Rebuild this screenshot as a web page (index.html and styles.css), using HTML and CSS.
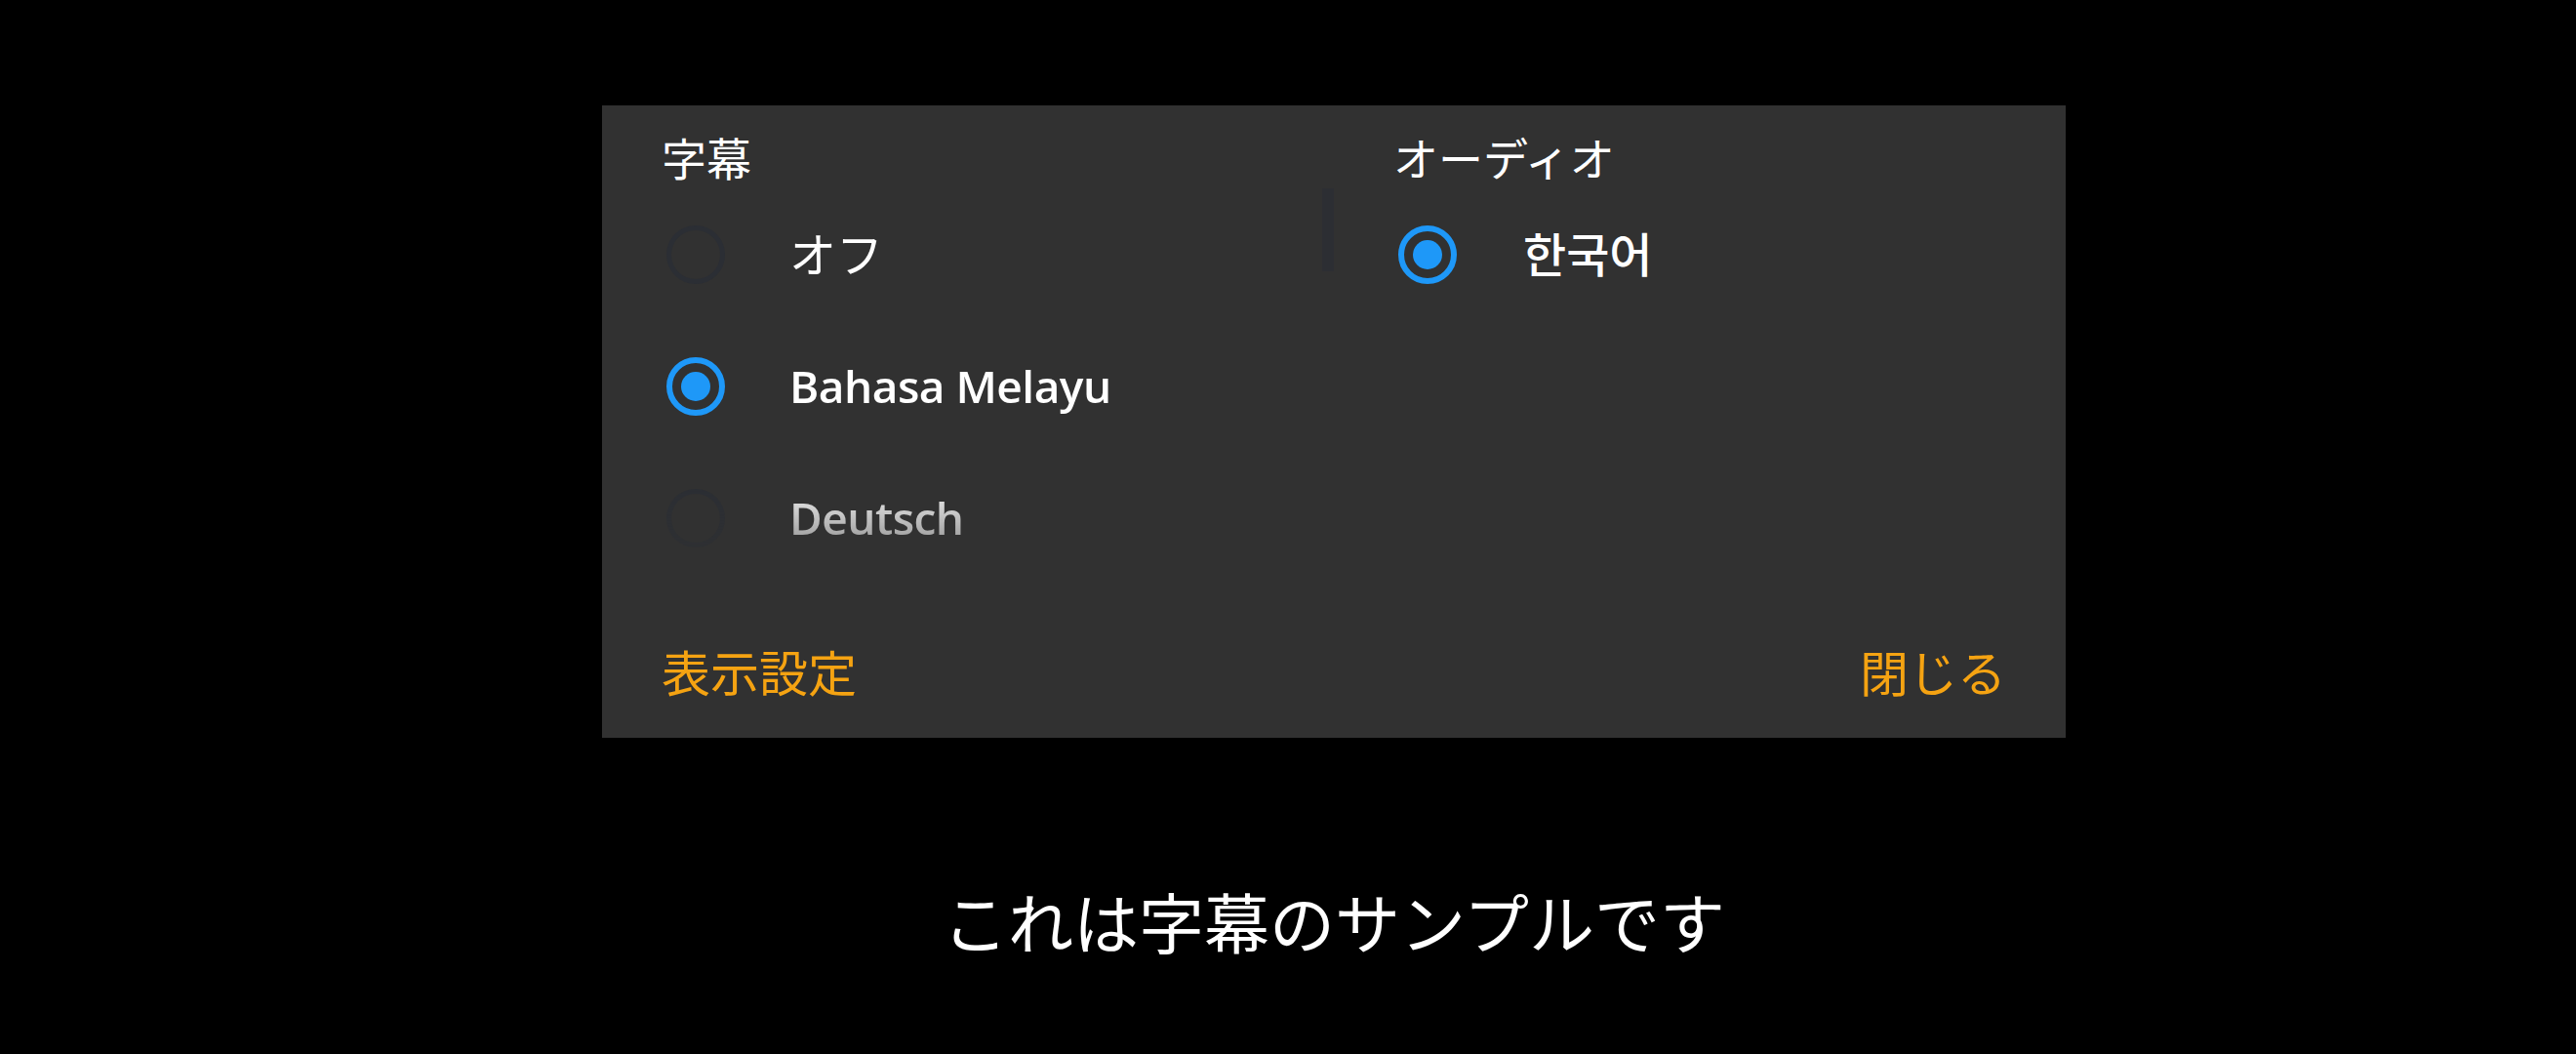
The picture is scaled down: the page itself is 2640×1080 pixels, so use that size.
FILE: index.html
```html
<!DOCTYPE html>
<html lang="ja">
<head>
<meta charset="utf-8">
<title>字幕とオーディオ</title>
<link rel="stylesheet" href="styles.css">
</head>
<body>
<div class="stage">
  <div class="player">
    <div class="panel">
      <div class="cols">
        <section class="col col-subs">
          <h2 class="col-title">字幕</h2>
          <ul class="list fade">
            <li class="row">
              <span class="radio"></span>
              <span class="label label-ja">オフ</span>
            </li>
            <li class="row selected">
              <span class="radio"></span>
              <span class="label label-latin">Bahasa Melayu</span>
            </li>
            <li class="row">
              <span class="radio"></span>
              <span class="label label-latin">Deutsch</span>
            </li>
          </ul>
        </section>
        <div class="scroll-track"><div class="scroll-thumb"></div></div>
        <section class="col col-audio">
          <h2 class="col-title">オーディオ</h2>
          <ul class="list">
            <li class="row selected">
              <span class="radio"></span>
              <span class="label label-ko">한국어</span>
            </li>
          </ul>
        </section>
      </div>
      <div class="actions">
        <span class="action">表示設定</span>
        <span class="action">閉じる</span>
      </div>
    </div>
    <div class="subtitle">これは字幕のサンプルです</div>
  </div>
</div>
</body>
</html>
```

FILE: styles.css
```css
* { box-sizing: border-box; }

html, body {
  margin: 0;
  padding: 0;
  background: #000;
  width: 2640px;
  height: 1080px;
  overflow: hidden;
}

body {
  font-family: "Noto Sans CJK JP", "Noto Sans", sans-serif;
  color: #fff;
}

.stage {
  padding-top: 108px;
  padding-left: 617px;
}

.player {
  width: 1500px;
  display: flex;
  flex-direction: column;
}

.panel {
  background: #313131;
  padding: 29px 61px 44px 61px;
  display: flex;
  flex-direction: column;
}

.cols {
  display: flex;
}

.col-subs {
  width: 677px;
}

.col-audio {
  flex: 1;
  margin-left: 61px;
}

.col-title {
  margin: 0;
  font-size: 46px;
  line-height: 46px;
  font-weight: 400;
  color: #fff;
  font-family: "Noto Sans CJK JP", sans-serif;
}

.list {
  list-style: none;
  margin: 10px 0 0 0;
  padding: 0;
  height: 405px;
}

.list.fade {
  -webkit-mask-image: linear-gradient(to bottom, #000 0, #000 297px, rgba(0,0,0,0) 433px);
  mask-image: linear-gradient(to bottom, #000 0, #000 297px, rgba(0,0,0,0) 433px);
}

.row {
  height: 135px;
  display: flex;
  align-items: center;
}

.radio {
  width: 60px;
  height: 60px;
  margin-left: 5px;
  border-radius: 50%;
  border: 5.5px solid #2b2e34;
  display: flex;
  align-items: center;
  justify-content: center;
  flex: none;
}

.row.selected .radio {
  border: 6px solid #1e98f8;
}

.row.selected .radio::after {
  content: "";
  width: 30px;
  height: 30px;
  border-radius: 50%;
  background: #1e98f8;
}

.label {
  margin-left: 66px;
  color: #fff;
  white-space: nowrap;
  position: relative;
  top: -3px;
}

.label-ja {
  font-family: "Noto Sans CJK JP", sans-serif;
  font-size: 48px;
  line-height: 48px;
  font-weight: 400;
}

.label-latin {
  font-family: "Open Sans", "Noto Sans", sans-serif;
  font-size: 46px;
  line-height: 48px;
  font-weight: 600;
  letter-spacing: -0.5px;
  top: -1px;
}

.label-ko {
  font-family: "Noto Sans CJK KR", sans-serif;
  font-size: 48px;
  line-height: 48px;
  font-weight: 500;
  margin-left: 68px;
}

.scroll-track {
  width: 12px;
  margin-top: 56px;
  height: 85px;
  flex: none;
}

.scroll-thumb {
  width: 12px;
  height: 85px;
  background: #2c2e33;
}

.actions {
  margin-top: 64px;
  display: flex;
  justify-content: space-between;
}

.action {
  font-family: "Noto Sans CJK JP", sans-serif;
  font-size: 50px;
  line-height: 50px;
  color: #f5a312;
  font-weight: 400;
}

.subtitle {
  margin-top: 154px;
  text-align: center;
  font-family: "Noto Sans CJK JP", sans-serif;
  font-size: 67px;
  line-height: 66px;
  color: #fff;
  font-weight: 400;
}
```
